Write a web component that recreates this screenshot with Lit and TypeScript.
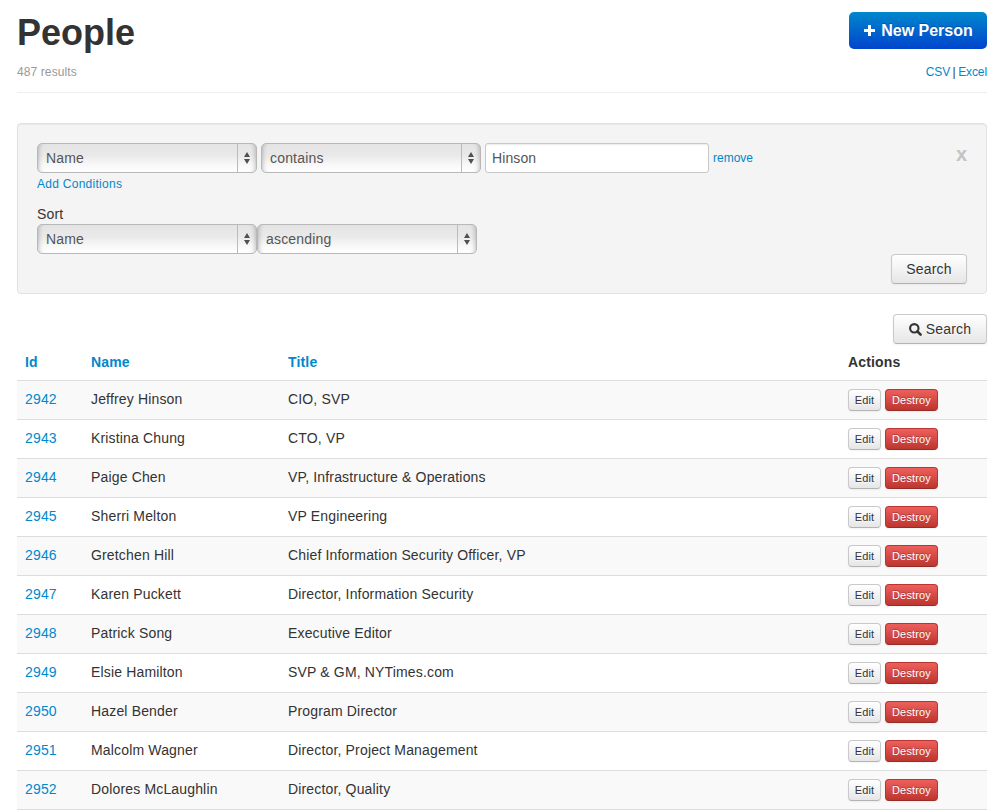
import { LitElement, html, css } from "lit";
import { customElement, property } from "lit/decorators.js";

interface Person {
  id: number;
  name: string;
  title: string;
}

const PEOPLE: Person[] = [
  { id: 2942, name: "Jeffrey Hinson", title: "CIO, SVP" },
  { id: 2943, name: "Kristina Chung", title: "CTO, VP" },
  { id: 2944, name: "Paige Chen", title: "VP, Infrastructure & Operations" },
  { id: 2945, name: "Sherri Melton", title: "VP Engineering" },
  { id: 2946, name: "Gretchen Hill", title: "Chief Information Security Officer, VP" },
  { id: 2947, name: "Karen Puckett", title: "Director, Information Security" },
  { id: 2948, name: "Patrick Song", title: "Executive Editor" },
  { id: 2949, name: "Elsie Hamilton", title: "SVP & GM, NYTimes.com" },
  { id: 2950, name: "Hazel Bender", title: "Program Director" },
  { id: 2951, name: "Malcolm Wagner", title: "Director, Project Management" },
  { id: 2952, name: "Dolores McLaughlin", title: "Director, Quality" },
];

/** Pop-up select with a divided arrow section. */
@customElement("pop-select")
export class PopSelect extends LitElement {
  @property() value = "";

  static styles = css`
    :host {
      display: flex;
      box-sizing: border-box;
      width: 220px;
      height: 30px;
      border: 1px solid #b8b8b8;
      border-radius: 5px;
      background: linear-gradient(#e4e4e4, #e9e9e9 40%, #f8f8f8 75%, #fff);
      box-shadow: inset 5px 0 4px -4px rgba(0, 0, 0, 0.22), inset -5px 0 4px -4px rgba(0, 0, 0, 0.22);
      color: #555;
      font-size: 14px;
      line-height: 28px;
      letter-spacing: 0.18px;
    }
    .value {
      flex: 1;
      padding-left: 8px;
    }
    .arrows {
      display: flex;
      align-items: center;
      width: 18px;
      border-left: 1px solid #bbb;
    }
    svg {
      display: block;
      margin-left: 6px;
    }
  `;

  render() {
    return html`
      <span class="value">${this.value}</span>
      <span class="arrows">
        <svg width="6" height="12" viewBox="0 0 6 12" fill="#505050">
          <path d="M3 0L6 5H0ZM3 12L6 7H0Z" />
        </svg>
      </span>
    `;
  }
}

@customElement("app-root")
export class AppRoot extends LitElement {
  static styles = css`
    :host {
      display: block;
      box-sizing: border-box;
      height: 810px;
      overflow: hidden;
      padding: 12px 21px 0 17px;
      background: #fff;
      color: #333;
      font: 14px/20px "Liberation Sans", Arial, sans-serif;
    }
    a {
      color: #0088cc;
      text-decoration: none;
    }
    .header {
      display: flex;
      justify-content: space-between;
      height: 80px;
      border-bottom: 1px solid #eee;
    }
    h1 {
      margin: 0;
      padding-top: 1px;
      font-size: 36px;
      line-height: 40px;
    }
    .count,
    .export {
      font-size: 12px;
    }
    .count {
      margin-top: 9px;
      color: #999;
      letter-spacing: 0.1px;
    }
    .export {
      margin-top: 13px;
      text-align: right;
      word-spacing: -0.7px;
      letter-spacing: -0.1px;
    }
    .btn {
      display: inline-flex;
      align-items: center;
      justify-content: center;
      box-sizing: border-box;
      height: 30px;
      padding: 0 14px;
      border: 1px solid #c9c9c9;
      border-bottom-color: #b3b3b3;
      border-radius: 4px;
      background: linear-gradient(#fff, #e6e6e6);
      box-shadow: inset 0 1px 0 rgba(255, 255, 255, 0.2), 0 1px 2px rgba(0, 0, 0, 0.05);
      color: #333;
      font: inherit;
      letter-spacing: 0.15px;
      text-shadow: 0 1px 1px rgba(255, 255, 255, 0.75);
      white-space: nowrap;
    }
    .primary {
      width: 138px;
      height: 37px;
      padding: 1px 0 0;
      gap: 5px;
      border: 0;
      border-radius: 5px;
      background: linear-gradient(#0088cc, #0044cc);
      box-shadow: none;
      color: #fff;
      font-size: 16px;
      font-weight: bold;
      letter-spacing: 0;
      text-shadow: 0 -1px 0 rgba(0, 0, 0, 0.25);
    }
    .primary svg {
      margin-top: -1px;
    }
    .mini {
      height: 22px;
      width: 33px;
      padding: 0;
      font-size: 11px;
    }
    .danger {
      width: 53px;
      border-color: #b93531 #b93531 #952c27;
      background: linear-gradient(#ee5f5b, #bd362f);
      box-shadow: 0 1px 2px rgba(0, 0, 0, 0.05);
      color: #fff;
      text-shadow: 0 -1px 0 rgba(0, 0, 0, 0.25);
    }
    .panel {
      display: flex;
      flex-direction: column;
      box-sizing: border-box;
      height: 171px;
      margin-top: 30px;
      padding: 19px;
      border: 1px solid #e1e1e1;
      border-radius: 4px;
      background: #f4f4f4;
      box-shadow: inset 0 1px 1px rgba(0, 0, 0, 0.05);
    }
    .condition {
      display: flex;
      align-items: center;
      gap: 4px;
      font-size: 12px;
    }
    input {
      box-sizing: border-box;
      width: 224px;
      height: 30px;
      padding: 0 6px;
      border: 1px solid #c8c8c8;
      border-radius: 3px;
      background: #fff;
      box-shadow: inset 0 1px 1px rgba(0, 0, 0, 0.075);
      color: #555;
      font: 14px "Liberation Sans", Arial, sans-serif;
      letter-spacing: 0.1px;
    }
    .close {
      margin: -8px 0 0 auto;
      color: #c3c3c3;
      font-size: 20px;
      font-weight: bold;
    }
    .add {
      margin-top: 1px;
      font-size: 12px;
      letter-spacing: 0.27px;
    }
    .label {
      margin-top: 10px;
      letter-spacing: 0.15px;
    }
    .sort {
      display: flex;
    }
    .submit {
      align-self: flex-end;
      width: 76px;
      padding: 0;
      flex: none;
    }
    .toolbar {
      display: flex;
      justify-content: flex-end;
      margin-top: 20px;
    }
    .toolbar .btn {
      width: 94px;
      padding: 0;
      gap: 4px;
    }
    .row {
      display: grid;
      grid-template-columns: 66px 197px 560px 147px;
      box-sizing: border-box;
      height: 39px;
      border-top: 1px solid #ddd;
      letter-spacing: 0.16px;
    }
    .row:nth-child(even) {
      background: #f9f9f9;
    }
    .row > * {
      padding: 8px 8px 0;
    }
    .head {
      height: 36px;
      border-top: 0;
      font-weight: bold;
    }
    .actions {
      display: flex;
      gap: 4px;
    }
    .table {
      border-bottom: 1px solid #ddd;
    }
  `;

  render() {
    return html`
      <div class="header">
        <div>
          <h1>People</h1>
          <div class="count">487 results</div>
        </div>
        <div>
          <button class="btn primary">
            <svg width="13" height="13" viewBox="0 0 13 13" fill="#fff">
              <path d="M5 1h3v4h4v3H8v4H5V8H1V5h4z" />
            </svg>
            New Person
          </button>
          <div class="export"><a href="#">CSV</a> | <a href="#">Excel</a></div>
        </div>
      </div>

      <div class="panel">
        <div class="condition">
          <pop-select value="Name"></pop-select>
          <pop-select value="contains"></pop-select>
          <input type="text" value="Hinson" />
          <a href="#">remove</a>
          <span class="close">x</span>
        </div>
        <a class="add" href="#">Add Conditions</a>
        <div class="label">Sort</div>
        <div class="sort">
          <pop-select value="Name"></pop-select>
          <pop-select value="ascending"></pop-select>
        </div>
        <button class="btn submit">Search</button>
      </div>

      <div class="toolbar">
        <button class="btn">
          <svg width="13" height="13" viewBox="0 0 13 13" fill="none" stroke="#333">
            <circle cx="5.3" cy="5.3" r="4.2" stroke-width="2.1" />
            <path d="M8.5 8.5L11.6 11.6" stroke-width="2.6" stroke-linecap="round" />
          </svg>
          Search
        </button>
      </div>

      <div class="table">
        <div class="row head">
          <a href="#">Id</a>
          <a href="#">Name</a>
          <a href="#">Title</a>
          <span>Actions</span>
        </div>
        ${PEOPLE.map(
          (p) => html`
            <div class="row">
              <a href="#">${p.id}</a>
              <span>${p.name}</span>
              <span>${p.title}</span>
              <div class="actions">
                <button class="btn mini">Edit</button>
                <button class="btn mini danger">Destroy</button>
              </div>
            </div>
          `
        )}
      </div>
    `;
  }
}
